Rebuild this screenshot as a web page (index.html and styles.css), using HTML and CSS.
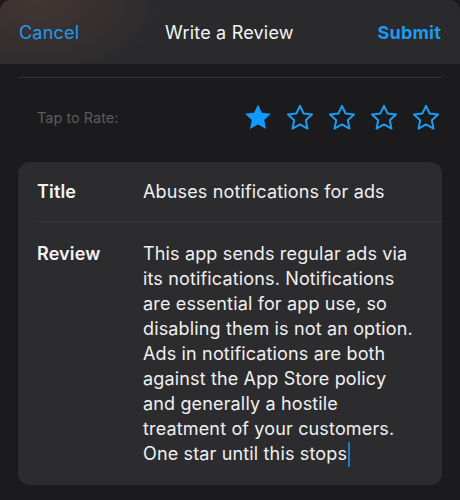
FILE: index.html
```html
<!DOCTYPE html>
<html>
<head>
<meta charset="utf-8">
<link rel="stylesheet" href="styles.css">
</head>
<body>
<header class="nav">
  <span class="nav-btn">Cancel</span>
  <span class="nav-title">Write a Review</span>
  <span class="nav-btn nav-strong">Submit</span>
</header>
<main class="content">
  <div class="divider"></div>
  <div class="rate-row">
    <span class="rate-label">Tap to Rate:</span>
    <div class="stars">
      <svg class="star" viewBox="0 0 30 28"><path class="filled" d="M15 1.5l3.9 8.3 9 1-6.7 6.2 1.9 8.9L15 21.4l-8.1 4.5 1.9-8.9L2.1 10.8l9-1z"/></svg>
      <svg class="star" viewBox="0 0 30 28"><path class="outline" d="M15 2.8l3.6 7.7 8.4 1-6.2 5.8 1.7 8.3L15 21.4l-7.5 4.2 1.7-8.3L3 11.5l8.4-1z"/></svg>
      <svg class="star" viewBox="0 0 30 28"><path class="outline" d="M15 2.8l3.6 7.7 8.4 1-6.2 5.8 1.7 8.3L15 21.4l-7.5 4.2 1.7-8.3L3 11.5l8.4-1z"/></svg>
      <svg class="star" viewBox="0 0 30 28"><path class="outline" d="M15 2.8l3.6 7.7 8.4 1-6.2 5.8 1.7 8.3L15 21.4l-7.5 4.2 1.7-8.3L3 11.5l8.4-1z"/></svg>
      <svg class="star" viewBox="0 0 30 28"><path class="outline" d="M15 2.8l3.6 7.7 8.4 1-6.2 5.8 1.7 8.3L15 21.4l-7.5 4.2 1.7-8.3L3 11.5l8.4-1z"/></svg>
    </div>
  </div>
  <section class="card">
    <div class="field field-title">
      <span class="field-label">Title</span>
      <span class="field-value">Abuses notifications for ads</span>
    </div>
    <div class="field field-review">
      <span class="field-label">Review</span>
      <span class="field-value">This app sends regular ads via<br>its notifications. Notifications<br>are essential for app use, so<br>disabling them is not an option.<br>Ads in notifications are both<br>against the App Store policy<br>and generally a hostile<br>treatment of your customers.<br>One star until this stops<span class="caret"></span></span>
    </div>
  </section>
</main>
</body>
</html>
```
FILE: styles.css
```css
html, body {
  margin: 0;
  padding: 0;
  background: #1b1b1d;
}
body {
  width: 460px;
  height: 500px;
  overflow: hidden;
  font-family: Inter, "Noto Sans", "Liberation Sans", sans-serif;
  color: #f2f2f4;
}
.nav {
  height: 64px;
  display: flex;
  align-items: center;
  justify-content: space-between;
  padding: 0 19px 0 19px;
  border-radius: 11px 11px 0 0;
  background:
    radial-gradient(ellipse 130px 80px at 35px 0px, rgba(110, 72, 64, 0.38), rgba(110, 72, 64, 0) 100%),
    #2a2a2c;
  font-size: 18px;
  letter-spacing: 0.2px;
  box-sizing: border-box;
}
.nav-btn {
  color: #1c9bef;
}
.nav-strong {
  font-weight: 700;
}
.nav-title {
  color: #f4f4f6;
  position: relative;
  left: 1px;
}
.content {
  padding: 0 18px;
}
.divider {
  margin-top: 13px;
  height: 1px;
  background: #323234;
}
.rate-row {
  display: flex;
  align-items: center;
  justify-content: space-between;
  padding: 25px 1px 31px 19px;
}
.rate-label {
  color: #5b5b5e;
  font-size: 14.5px;
}
.stars {
  display: flex;
  gap: 12px;
}
.star {
  width: 30px;
  height: 28px;
  display: block;
}
.filled {
  fill: #0f9bff;
}
.outline {
  fill: none;
  stroke: #1c9bef;
  stroke-width: 2;
  stroke-linejoin: round;
}
.card {
  background: #2c2c2e;
  border-radius: 12px;
}
.field {
  display: flex;
  font-size: 18px;
  line-height: 25px;
  letter-spacing: 0.15px;
  padding-left: 19px;
}
.field-title {
  padding-top: 17px;
  padding-bottom: 17px;
  border-bottom: 1px solid #3a3a3c;
  margin-left: 19px;
  padding-left: 0;
}
.field-review {
  padding-top: 19px;
  padding-bottom: 18px;
}
.field-label {
  width: 106px;
  flex: none;
  font-weight: 600;
  color: #f4f4f6;
}
.field-value {
  color: #f0f0f2;
}
.caret {
  display: inline-block;
  width: 2px;
  height: 25px;
  background: #1b7fd0;
  vertical-align: -7px;
  margin-left: 1px;
}
```
